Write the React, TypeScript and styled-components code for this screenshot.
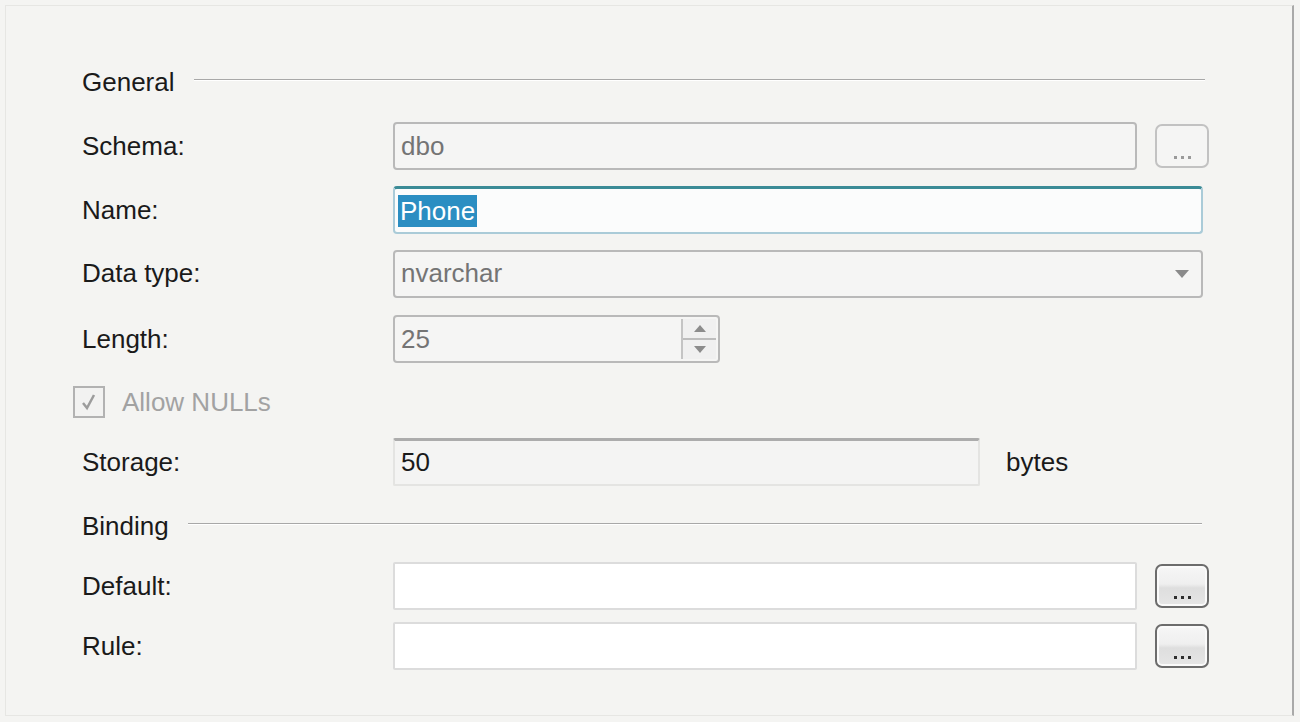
import styled, {createGlobalStyle} from "styled-components";

const Global = createGlobalStyle`
  html, body {
    margin: 0;
    padding: 0;
    background: #f4f4f2;
  }
  body {
    font-family: "Liberation Sans", Arial, sans-serif;
  }
`;

const Page = styled.div`
  width: 1300px;
  height: 722px;
  box-sizing: border-box;
  padding: 5px 6px 6px 5px;
  background: #f4f4f2;
`;

const Panel = styled.div`
  height: 100%;
  box-sizing: border-box;
  border: 1px solid #e6e6e3;
  border-right: 2px solid #a9a9a9;
  padding: 44px 0 0 76px;
  display: flex;
  flex-direction: column;
`;

const Row = styled.div<{ $h: number; $indent?: number }>`
  height: ${p => p.$h}px;
  display: flex;
  align-items: center;
  margin-left: ${p => p.$indent ?? 0}px;
`;

const Label = styled.div`
  width: 311px;
  flex: none;
  font-size: 26px;
  color: #1a1a1a;
`;

const SectionTitle = styled.div`
  font-size: 26px;
  color: #1a1a1a;
  margin-right: 19px;
`;

const Rule = styled.div<{ $w: number }>`
  width: ${p => p.$w}px;
  height: 1px;
  background: #a8a8a8;
  border-bottom: 1px solid #ffffff;
  margin-top: -4px;
`;

const Field = styled.div<{ $w: number; $kind: "disabled" | "focus" | "plain" | "readonly" }>`
  position: relative;
  width: ${p => p.$w}px;
  height: 48px;
  box-sizing: border-box;
  display: flex;
  align-items: center;
  padding-left: 6px;
  font-size: 26px;
  border-radius: 4px;
  ${p => p.$kind === "disabled" && `
    background: #f5f5f4;
    border: 2px solid #b9b9b9;
    color: #747474;
  `}
  ${p => p.$kind === "focus" && `
    background: #fbfcfc;
    border: 2px solid #aacbd8;
    border-top: 3px solid #3b8b96;
    color: #fff;
    padding-left: 3px;
  `}
  ${p => p.$kind === "plain" && `
    background: #ffffff;
    border: 2px solid #dcdcdc;
    border-radius: 2px;
  `}
  ${p => p.$kind === "readonly" && `
    background: #f4f4f3;
    border: 2px solid #e4e4e2;
    border-top: 3px solid #acacac;
    border-radius: 2px;
    color: #1a1a1a;
  `}
`;

const Selected = styled.span`
  background: #2b8ec2;
  color: #ffffff;
  padding: 0 2px;
  line-height: 32px;
`;

const DotsButton = styled.div<{ $active?: boolean }>`
  width: 54px;
  height: 44px;
  margin-left: 18px;
  box-sizing: border-box;
  border-radius: 7px;
  display: flex;
  align-items: flex-end;
  justify-content: center;
  padding-bottom: 7px;
  gap: 4px;
  border: 2px solid ${p => (p.$active ? "#6c6c6c" : "#c2c2c2")};
  background: ${p =>
    p.$active
      ? "linear-gradient(#f6f6f6 0%, #efefef 45%, #dedede 55%, #e6e6e6 100%)"
      : "#f5f5f4"};
  box-shadow: ${p => (p.$active ? "inset 0 0 0 2px #fafafa" : "none")};
`;

const Dot = styled.i<{ $active?: boolean }>`
  width: 3px;
  height: 3px;
  background: ${p => (p.$active ? "#2f2f2f" : "#9a9a9a")};
`;

const Arrow = styled.svg`
  position: absolute;
  right: 12px;
  top: 18px;
`;

const Spinner = styled.div`
  position: absolute;
  right: 2px;
  top: 2px;
  bottom: 2px;
  width: 33px;
  display: flex;
  flex-direction: column;
  border-left: 2px solid #c4c4c4;
`;

const SpinHalf = styled.div<{ $top?: boolean }>`
  flex: 1;
  display: flex;
  align-items: center;
  justify-content: center;
  background: #f0f0f0;
  border-bottom: ${p => (p.$top ? "2px solid #bdbdbd" : "none")};
`;

const Check = styled.div`
  width: 32px;
  height: 32px;
  box-sizing: border-box;
  border: 2px solid #b2b2b2;
  background: #f2f2f1;
  display: flex;
  align-items: center;
  justify-content: center;
  margin-right: 17px;
`;

const CheckLabel = styled.div`
  font-size: 26px;
  color: #a2a2a2;
`;

const Unit = styled.div`
  font-size: 26px;
  color: #1a1a1a;
  margin-left: 26px;
`;

function Dots({active}: { active?: boolean }) {
    return (
        <DotsButton $active={active}>
            <Dot $active={active}/>
            <Dot $active={active}/>
            <Dot $active={active}/>
        </DotsButton>
    );
}

function App() {
    return (
        <Page>
            <Global/>
            <Panel>
                <Row $h={64}>
                    <SectionTitle>General</SectionTitle>
                    <Rule $w={1011}/>
                </Row>
                <Row $h={64}>
                    <Label>Schema:</Label>
                    <Field $w={744} $kind="disabled">dbo</Field>
                    <Dots/>
                </Row>
                <Row $h={64}>
                    <Label>Name:</Label>
                    <Field $w={810} $kind="focus"><Selected>Phone</Selected></Field>
                </Row>
                <Row $h={63}>
                    <Label>Data type:</Label>
                    <Field $w={810} $kind="disabled">
                        nvarchar
                        <Arrow width="14" height="9" viewBox="0 0 14 9">
                            <path d="M0 0 H14 L7 8 Z" fill="#8a8a8a"/>
                        </Arrow>
                    </Field>
                </Row>
                <Row $h={68}>
                    <Label>Length:</Label>
                    <Field $w={327} $kind="disabled">
                        25
                        <Spinner>
                            <SpinHalf $top>
                                <svg width="12" height="7" viewBox="0 0 12 7">
                                    <path d="M6 0 L12 7 H0 Z" fill="#8c8c8c"/>
                                </svg>
                            </SpinHalf>
                            <SpinHalf>
                                <svg width="12" height="7" viewBox="0 0 12 7">
                                    <path d="M0 0 H12 L6 7 Z" fill="#8c8c8c"/>
                                </svg>
                            </SpinHalf>
                        </Spinner>
                    </Field>
                </Row>
                <Row $h={58} $indent={-9}>
                    <Check>
                        <svg width="20" height="20" viewBox="0 0 20 20">
                            <path d="M4 11 L8 16 L15 3" fill="none" stroke="#9c9c9c" strokeWidth="2.5"/>
                        </svg>
                    </Check>
                    <CheckLabel>Allow NULLs</CheckLabel>
                </Row>
                <Row $h={62}>
                    <Label>Storage:</Label>
                    <Field $w={587} $kind="readonly">50</Field>
                    <Unit>bytes</Unit>
                </Row>
                <Row $h={66}>
                    <SectionTitle>Binding</SectionTitle>
                    <Rule $w={1014}/>
                </Row>
                <Row $h={54}>
                    <Label>Default:</Label>
                    <Field $w={744} $kind="plain"/>
                    <Dots active/>
                </Row>
                <Row $h={66}>
                    <Label>Rule:</Label>
                    <Field $w={744} $kind="plain"/>
                    <Dots active/>
                </Row>
            </Panel>
        </Page>
    );
}

export default App;
